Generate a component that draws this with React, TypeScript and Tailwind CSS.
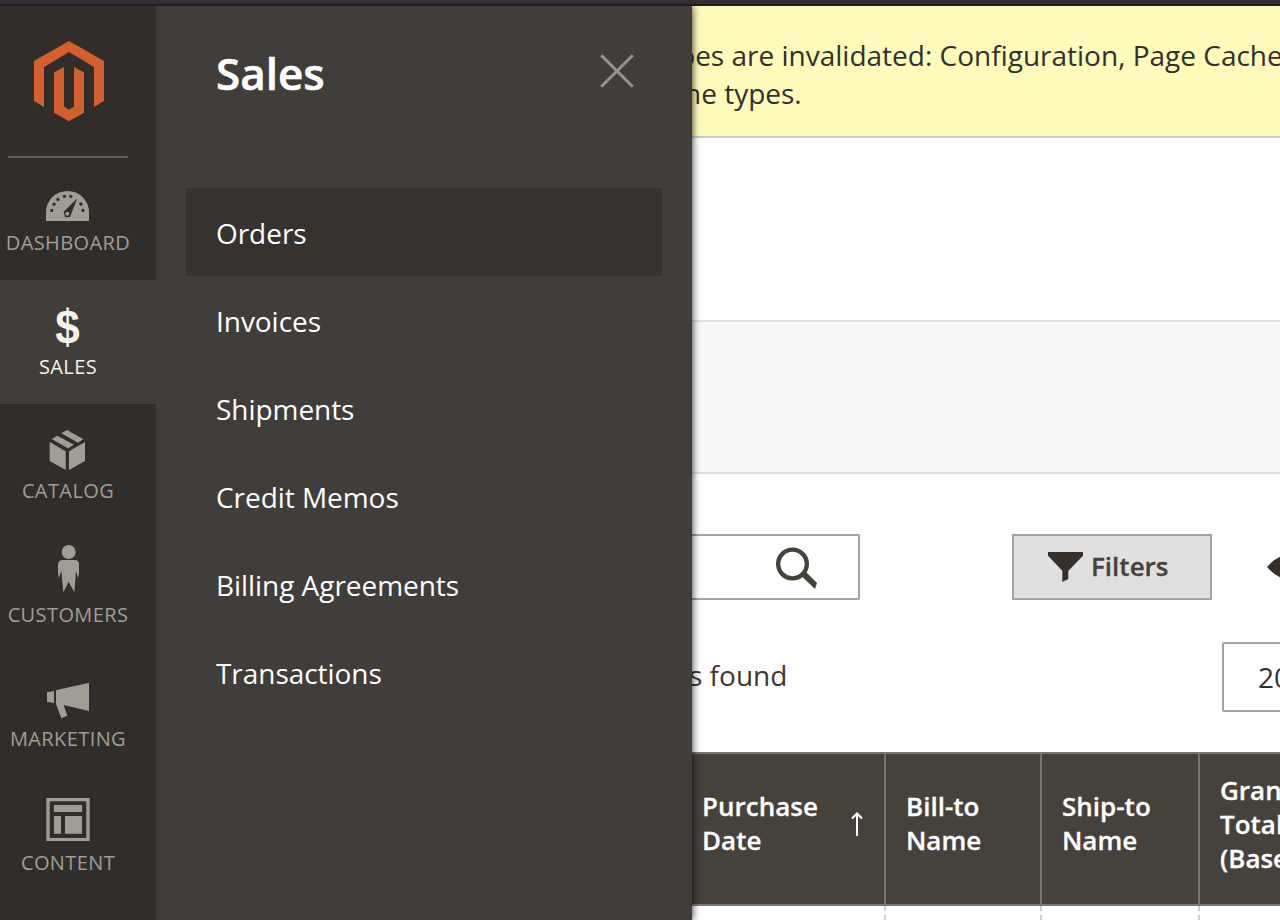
import type { ReactNode } from 'react';

type NavEntry = { label: string; icon: ReactNode; active?: boolean };

const iconClass = 'block h-[60px] w-[60px] fill-current';

const navEntries: NavEntry[] = [
  {
    label: 'Dashboard',
    icon: (
      <svg viewBox="114 504 180 180" className={iconClass}>
        <path d="M138 663V636a64.5 63 0 0 1 129 0V663z" />
        <g className="fill-[#312d2a]">
          <path d="M232 595L191 635 195 652 210 651z" />
          <rect x="151" y="627" width="8" height="9" />
          <rect x="158" y="608" width="9" height="9" transform="rotate(30 162 612)" />
          <rect x="170" y="594" width="9" height="9" transform="rotate(60 174 598)" />
          <rect x="189" y="585" width="9" height="8" transform="rotate(-12 193 589)" />
          <rect x="208" y="585" width="9" height="8" transform="rotate(12 212 589)" />
          <rect x="238" y="608" width="9" height="9" transform="rotate(-28 242 612)" />
          <rect x="245" y="627" width="8" height="9" />
        </g>
        <circle cx="202" cy="641" r="6" />
      </svg>
    ),
  },
  {
    label: 'Sales',
    active: true,
    icon: (
      <span className="mr-px block h-[60px] origin-center scale-y-110 pt-[4px] font-['Liberation_Sans',sans-serif] text-[44px] leading-[60px] font-bold">
        $
      </span>
    ),
  },
  {
    label: 'Catalog',
    icon: (
      <svg viewBox="114 438 180 180" className={iconClass}>
        <path d="M201 480L250 508 234 518 184 490zM172 497L222 524 204 535 155 507zM149 516L197 544V600L149 573zM255 516L207 544V600L255 573z" />
      </svg>
    ),
  },
  {
    label: 'Customers',
    icon: (
      <svg viewBox="114 90 180 180" className={iconClass}>
        <circle cx="206" cy="126" r="21" />
        <path d="M188 150H224Q237 150 237 164V192L234 204 228 183 223 247 206 215 190 247 184 183 177 204 174 190V164Q174 150 188 150z" />
      </svg>
    ),
  },
  {
    label: 'Marketing',
    icon: (
      <svg viewBox="114 462 180 180" className={iconClass}>
        <path d="M141 547L162 543V579L141 575zM168 541L267 518V603L191 585 202 617 184 625 168 582z" />
      </svg>
    ),
  },
  {
    label: 'Content',
    icon: (
      <svg viewBox="114 144 180 180" className={iconClass}>
        <path
          fillRule="evenodd"
          d="M139 174H269V303H139zM149 184V294H259V184zM162 195H246V216H162zM162 228H183V281H162zM195 228H246V281H195z"
        />
      </svg>
    ),
  },
];

const salesLinks = ['Orders', 'Invoices', 'Shipments', 'Credit Memos', 'Billing Agreements', 'Transactions'];

function Sidebar() {
  return (
    <nav className="flex w-[156px] shrink-0 flex-col bg-[#312d2a]">
      <div className="h-[150px] pt-[30px] pl-[29px]">
        <svg viewBox="29 36 80 90" className="block h-[90px] w-[80px] fill-[#d35f2d]">
          <path d="M69 41L104 61V101L94 107V67L69 52 44 67V107L34 101V61z" />
          <path d="M54 72.5L64 67V106.5L69 109.7 74 106.5V67L84 72.5V112.7L69 121.3 54 112.7z" />
        </svg>
      </div>
      <div className="-mb-[2px] ml-2 h-[2px] w-[120px] shrink-0 bg-[#655d56]" />
      {navEntries.map((entry) => (
        <a
          key={entry.label}
          className={
            entry.active
              ? 'flex h-[124px] shrink-0 flex-col items-center bg-[#413d3a] pt-3 pr-5 text-[#f7f3eb]'
              : 'flex h-[124px] shrink-0 flex-col items-center pt-3 pr-5 text-[#a19d95]'
          }
        >
          {entry.icon}
          <span className="text-[20px] leading-[30px] tracking-[0.4px] whitespace-nowrap uppercase">{entry.label}</span>
        </a>
      ))}
    </nav>
  );
}

function SalesMenu() {
  return (
    <section className="z-10 flex w-[536px] shrink-0 flex-col bg-[#413d3a] px-[30px] text-white shadow-[0_0_8px_rgba(0,0,0,0.85)] [clip-path:inset(0_-20px_0_0)]">
      <header className="flex h-[182px] items-start justify-between pr-[26px] pl-[30px]">
        <h1 className="pt-[37px] text-[44px] leading-[60px] font-semibold [-webkit-text-stroke:0.6px_white]">Sales</h1>
        <svg viewBox="0 0 38 38" className="mt-[46px] h-[38px] w-[38px] fill-none stroke-[#9b918b] stroke-3">
          <path d="M3.2 3.2L34.8 34.8M34.8 3.2L3.2 34.8" />
        </svg>
      </header>
      {salesLinks.map((link, i) => (
        <a
          key={link}
          className={
            i === 0
              ? 'flex h-[88px] items-center bg-[#37322e] px-[30px] pt-px text-[28px] tracking-[-0.05px]'
              : 'flex h-[88px] items-center px-[30px] pt-px text-[28px] tracking-[-0.05px]'
          }
        >
          {link}
        </a>
      ))}
    </section>
  );
}

const headCell = 'flex shrink-0 items-center border-r-2 border-[#7a7471] pl-5';
const bodyCell = 'shrink-0 border-r-2 border-dashed border-[#cccccc]';

function OrdersPage() {
  return (
    <main className="flex min-w-0 flex-1 flex-col overflow-hidden bg-white">
      <div className="h-[132px] shrink-0 border-b-2 border-[#cccccc] bg-[#fffbbb] pt-[30px] text-[28px] leading-[38px] whitespace-nowrap text-[#303030]">
        <p className="-ml-[14px]">pes are invalidated: Configuration, Page Cache</p>
        <p className="-ml-[8px]">he types.</p>
      </div>
      <div className="h-[182px] shrink-0" />
      <div className="h-[154px] shrink-0 border-y-2 border-[#dfdfdf] bg-[#f8f8f8]" />
      <div className="mt-[60px] flex h-[66px] shrink-0 items-center">
        <div className="flex h-full w-[168px] shrink-0 items-center justify-end rounded-r-[2px] border-2 border-l-0 border-[#a3a3a3] pt-[2px] pr-[39px]">
          <svg viewBox="345 141 132 129" className="h-[43px] w-[44px]">
            <circle cx="397.5" cy="192" r="43" className="fill-none stroke-[#46413a] stroke-[13]" />
            <path d="M425 229L438 216 471 249 465 267z" className="fill-[#46413a]" />
          </svg>
        </div>
        <button className="ml-[152px] flex h-full w-[200px] shrink-0 items-center border-2 border-[#a3a3a3] bg-[#e0e0e0] pl-[34px] text-[26px] font-semibold text-[#46413a]">
          <svg viewBox="204 156 105 90" className="mr-2 h-[30px] w-[35px] fill-[#372f2a]">
            <path d="M204 156H309V167L265 212V237L247 246V212L204 167z" />
          </svg>
          <span className="pb-0.5 [-webkit-text-stroke:0.3px_#46413a]">Filters</span>
        </button>
        <svg viewBox="0 0 44 28" className="ml-[54px] h-[28px] w-[44px] shrink-0 fill-[#372f2a]">
          <path d="M1 14Q22-10 43 14Q22 38 1 14z" />
        </svg>
      </div>
      <div className="mt-[42px] flex h-[70px] shrink-0 items-center text-[28px] whitespace-nowrap">
        <span className="-ml-[3px] w-[533px] shrink-0 pb-1 text-[#41362f]">s found</span>
        <span className="flex h-full w-[160px] shrink-0 items-center rounded-[2px] border-2 border-[#a3a3a3] pl-[34px] text-[#303030]">
          20
        </span>
      </div>
      <div className="mt-10 flex h-[154px] shrink-0 border-y-2 border-[#7a7471] bg-[#46413a] text-[26px] leading-[34px] font-semibold text-white [-webkit-text-stroke:0.3px_white]">
        <div className="flex w-[194px] shrink-0 items-center border-r-2 border-[#7a7471] pl-[10px]">
          <span className="w-[140px] pb-3">
            Purchase
            <br />
            Date
          </span>
          <svg viewBox="0 0 14 26" className="mb-[10px] ml-[8px] h-[26px] w-[14px] fill-none stroke-white stroke-2">
            <path d="M7 25V2.5M2 7.5L7 2.5 12 7.5" />
          </svg>
        </div>
        <div className={`${headCell} w-[156px] pb-3`}>
          Bill-to
          <br />
          Name
        </div>
        <div className={`${headCell} w-[158px] pb-3`}>
          Ship-to
          <br />
          Name
        </div>
        <div className={`${headCell} w-[160px] pb-[10px]`}>
          Grand
          <br />
          Total
          <br />
          (Base)
        </div>
      </div>
      <div className="flex min-h-0 flex-1">
        <div className={`${bodyCell} w-[194px]`} />
        <div className={`${bodyCell} w-[156px]`} />
        <div className={`${bodyCell} w-[158px]`} />
      </div>
    </main>
  );
}

export default function App() {
  return (
    <div className="flex h-[920px] w-[1280px] flex-col overflow-hidden bg-white font-['Open_Sans',sans-serif]">
      <div className="h-[6px] shrink-0 border-b-2 border-[#1f1e1e] bg-[#303034]" />
      <div className="flex min-h-0 flex-1 overflow-hidden">
        <Sidebar />
        <SalesMenu />
        <OrdersPage />
      </div>
    </div>
  );
}
